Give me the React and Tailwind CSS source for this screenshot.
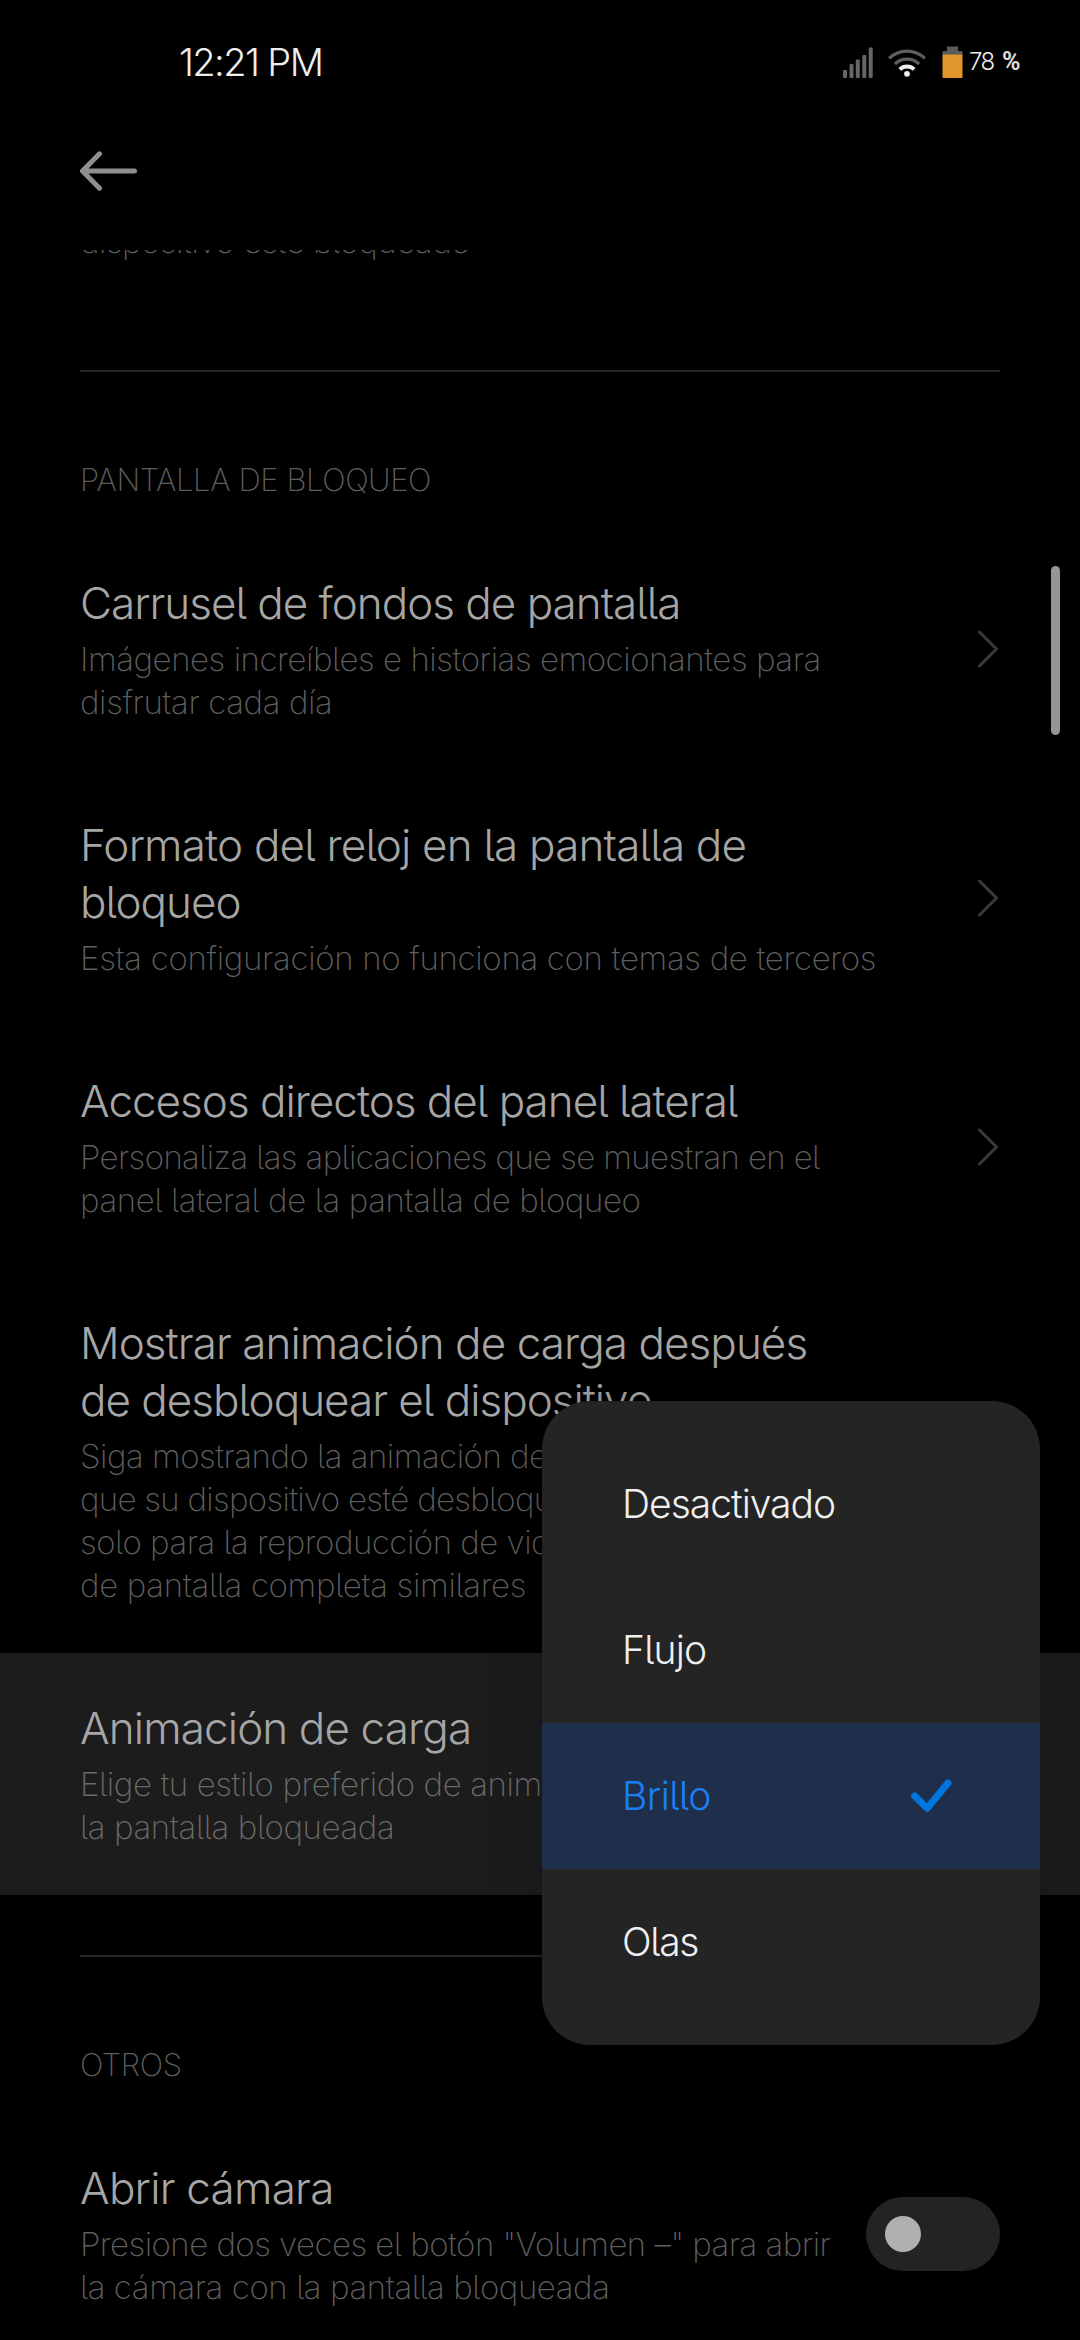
// Icons as simple SVG components
const BackIcon = () => (
  <svg width="57" height="40" viewBox="0 0 57 40" fill="none" stroke="#8f8f8f"
    strokeWidth="5" strokeLinecap="round" strokeLinejoin="round">
    <path d="M19.5 2.8L2.5 20l17 17.2M2.5 20h52" />
  </svg>
)

const ChevronIcon = () => (
  <svg width="22" height="38" viewBox="0 0 22 38" fill="none" stroke="#3a3a3a"
    strokeWidth="3" strokeLinecap="round" strokeLinejoin="round"
    className="mb-px shrink-0">
    <path d="M1.5 2L18.5 19l-17 17" />
  </svg>
)

const CheckIcon = () => (
  <svg width="41" height="34" viewBox="0 0 41 34" fill="none" stroke="#0075e0"
    strokeWidth="7" strokeLinecap="round" strokeLinejoin="round">
    <path d="M3.7 17l12.5 12.3L37 4" />
  </svg>
)

const SignalIcon = () => (
  <svg width="30" height="31" viewBox="0 0 30 31" fill="#666666">
    <rect x="0" y="23" width="4" height="8" rx="1" />
    <rect x="6.5" y="17" width="4" height="14" rx="1" />
    <rect x="12.8" y="12.5" width="4" height="18.5" rx="1" />
    <rect x="19.3" y="8" width="4" height="23" rx="1" />
    <rect x="25.7" y="0.5" width="4" height="30.5" rx="1" />
  </svg>
)

const WifiIcon = () => (
  <svg width="38" height="29" viewBox="0 0 38 29" fill="none" strokeWidth="3.4">
    <path d="M1.2 10.4a25.5 25.5 0 0 1 35.6 0" stroke="#5e5e5e" />
    <path d="M6.9 16a17.5 17.5 0 0 1 24.2 0" stroke="#5e5e5e" />
    <path d="M11.8 21.4a10.4 10.4 0 0 1 14.4 0" stroke="#eeeeee" strokeWidth="3.8" />
    <circle cx="19" cy="25.8" r="2.9" fill="#eeeeee" />
  </svg>
)

const BatteryIcon = () => (
  <svg width="21" height="32" viewBox="0 0 21 32">
    <path d="M5 0.5h11v4.5h3.5a1 1 0 0 1 1 1V9H0.500V6a1 1 0 0 1 1-1H5z" fill="#5a5a5a" />
    <path d="M0.500 8.500h20V31a1 1 0 0 1-1 1h-18a1 1 0 0 1-1-1z" fill="#e0952d" />
  </svg>
)

const Toggle = () => (
  <div className="mb-px flex h-[74px] w-[134px] shrink-0 items-center rounded-full bg-[#232323] pl-[19px]">
    <div className="h-9 w-9 rounded-full bg-[#b0b0b0]" />
  </div>
)

// Each item is [text, tracking class]
const Lines = ({ items, className }) => (
  <div className={className}>
    {items.map(([text, tracking]) => (
      <div key={text} className={`whitespace-nowrap ${tracking}`}>{text}</div>
    ))}
  </div>
)

// One preference: title lines, summary lines and a control at the right
const Row = ({ title, summary, active, children }) => (
  <div className={`flex items-center justify-between pl-20 pr-20 pt-[47px] pb-[46px] ${
    active ? 'bg-[#1c1c1c]' : ''
  }`}>
    <div className="min-w-0">
      <Lines items={title}
        className="text-[44px] leading-[57px] font-light text-[#a6a6a6]" />
      <Lines items={summary}
        className={`mt-1.5 text-[33px] leading-[43px] font-extralight ${
          active ? 'text-[#6a6a6a]' : 'text-[#5e5e5e]'
        }`} />
    </div>
    {children}
  </div>
)

const Section = ({ label }) => (
  <>
    <div className="mx-20 h-0.5 bg-[#262626]" />
    <div className="px-20 pt-[86px] pb-[26px] text-[31px] leading-[44px] font-extralight
      tracking-[-0.4px] text-[#5e5e5e]">
      {label}
    </div>
  </>
)

const OPTIONS = [
  ['Desactivado', 'tracking-[-1px]'],
  ['Flujo', 'tracking-[-0.8px]'],
  ['Brillo', 'tracking-[-0.5px]'],
  ['Olas', 'tracking-[-1.3px]'],
]

const OptionMenu = ({ selected }) => (
  <div className="absolute left-[542px] top-[1401px] w-[498px] overflow-hidden rounded-[48px]
    bg-[#242424] py-[30px] shadow-[0_0_60px_rgba(0,0,0,0.2)]">
    {OPTIONS.map(([option, tracking]) => (
      <div key={option}
        className={`flex h-[146px] items-center justify-between pl-20 pr-[88px] text-[39px]
          font-light ${tracking} ${
          option === selected
            ? 'bg-[#1f2f4b] text-[#1a80f2]'
            : 'text-[#efefef]'
        }`}>
        {option}
        {option === selected && <CheckIcon />}
      </div>
    ))}
  </div>
)

const App = () => (
  <div className="relative h-[2340px] w-[1080px] overflow-hidden bg-black
    font-['Inter','Roboto',sans-serif] [font-feature-settings:'cv05']">

    {/* Status bar */}
    <div className="flex h-[124px] items-center justify-between pl-[179px] pr-[58px]">
      <span className="text-[38px] font-light tracking-[-1.6px] text-[#eeeeee]">12:21 PM</span>
      <div className="flex items-center">
        <SignalIcon />
        <span className="ml-[15px]"><WifiIcon /></span>
        <span className="ml-[16px]"><BatteryIcon /></span>
        <span className="ml-[6px] w-[27px] text-2xl font-light tracking-[-1.5px] text-[#eeeeee]">78</span>
        <span className="ml-[6px] w-5 font-['Roboto',sans-serif] text-[25px] font-bold text-[#dddddd]">%</span>
      </div>
    </div>

    {/* App bar */}
    <div className="flex h-[126px] items-center pl-20 pb-[33px]">
      <BackIcon />
    </div>

    {/* Scrolled preference list */}
    <div className="h-[2090px] overflow-hidden">
      <div className="-mt-[30px] h-[150px] px-20 text-[33px] leading-[43px] font-extralight
        tracking-[-0.5px] text-[#5e5e5e]">
        dispositivo esté bloqueado
      </div>

      <Section label="PANTALLA DE BLOQUEO" />
      <Row title={[['Carrusel de fondos de pantalla', 'tracking-[-1px]']]}
        summary={[
          ['Imágenes increíbles e historias emocionantes para', 'tracking-[-0.45px]'],
          ['disfrutar cada día', 'tracking-[-0.4px]'],
        ]}>
        <ChevronIcon />
      </Row>
      <Row title={[
          ['Formato del reloj en la pantalla de', 'tracking-[-0.8px]'],
          ['bloqueo', 'tracking-[-1px]'],
        ]}
        summary={[
          ['Esta configuración no funciona con temas de terceros', 'tracking-[-0.32px]'],
        ]}>
        <ChevronIcon />
      </Row>
      <Row title={[['Accesos directos del panel lateral', 'tracking-[-1px]']]}
        summary={[
          ['Personaliza las aplicaciones que se muestran en el', 'tracking-[-0.62px]'],
          ['panel lateral de la pantalla de bloqueo', 'tracking-[-0.37px]'],
        ]}>
        <ChevronIcon />
      </Row>
      <Row title={[
          ['Mostrar animación de carga después', 'tracking-[-0.93px]'],
          ['de desbloquear el dispositivo', 'tracking-[-1px]'],
        ]}
        summary={[
          ['Siga mostrando la animación de', 'tracking-[-0.5px]'],
          ['que su dispositivo esté desbloqueado', 'tracking-[-0.7px]'],
          ['solo para la reproducción de videos', 'tracking-[-0.5px]'],
          ['de pantalla completa similares', 'tracking-[-0.33px]'],
        ]} />
      <Row active title={[['Animación de carga', 'tracking-[-0.87px]']]}
        summary={[
          ['Elige tu estilo preferido de animación', 'tracking-[-0.4px]'],
          ['la pantalla bloqueada', 'tracking-[-0.37px]'],
        ]} />

      <div className="h-[60px]" />
      <Section label="OTROS" />
      <Row title={[['Abrir cámara', 'tracking-[-0.75px]']]}
        summary={[
          ['Presione dos veces el botón "Volumen –" para abrir', 'tracking-[-0.53px]'],
          ['la cámara con la pantalla bloqueada', 'tracking-[-0.42px]'],
        ]}>
        <Toggle />
      </Row>
    </div>

    {/* Scroll thumb */}
    <div className="absolute right-5 top-[566px] h-[169px] w-[9px] rounded-full bg-[#959595]" />

    <OptionMenu selected="Brillo" />
  </div>
)

export default App
